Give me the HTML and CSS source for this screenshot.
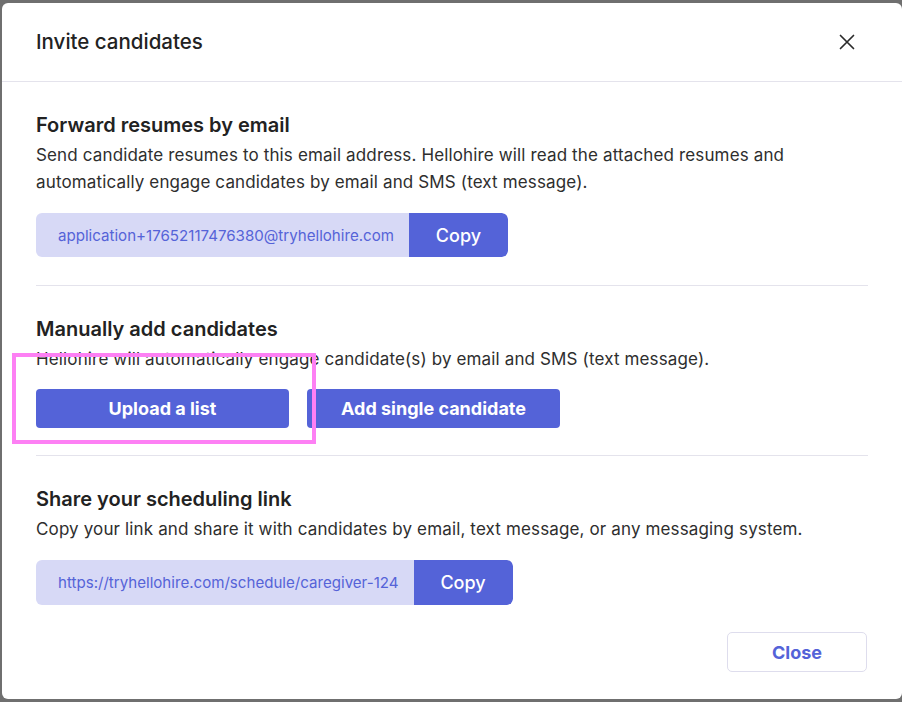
FILE: index.html
```html
<!DOCTYPE html>
<html lang="en">
<head>
<meta charset="utf-8">
<title>Invite candidates</title>
<link rel="stylesheet" href="styles.css">
</head>
<body>
<div class="modal">
  <header class="modal-header">
    <h2 class="modal-title">Invite candidates</h2>
    <button class="icon-close" aria-label="Close">
      <svg width="16" height="16" viewBox="0 0 16 16"><path d="M1.5 1.5 L14.5 14.5 M14.5 1.5 L1.5 14.5" stroke="#2b2b2b" stroke-width="1.7" stroke-linecap="round" fill="none"/></svg>
    </button>
  </header>

  <section class="section">
    <h3 class="section-title">Forward resumes by email</h3>
    <p class="section-desc">Send candidate resumes to this email address. Hellohire will read the attached resumes and automatically engage candidates by email and SMS (text message).</p>
    <div class="copy-field">
      <span class="field-value">application+17652117476380@tryhellohire.com</span>
      <button class="copy-btn">Copy</button>
    </div>
  </section>

  <section class="section section-divided section-manual">
    <h3 class="section-title">Manually add candidates</h3>
    <p class="section-desc">Hellohire will automatically engage candidate(s) by email and SMS (text message).</p>
    <div class="btn-row">
      <button class="primary-btn">Upload a list</button>
      <button class="primary-btn">Add single candidate</button>
    </div>
  </section>

  <section class="section section-divided section-share">
    <h3 class="section-title">Share your scheduling link</h3>
    <p class="section-desc">Copy your link and share it with candidates by email, text message, or any messaging system.</p>
    <div class="copy-field copy-field-tall">
      <span class="field-value">https://tryhellohire.com/schedule/caregiver-124</span>
      <button class="copy-btn">Copy</button>
    </div>
  </section>

  <footer class="modal-footer">
    <button class="secondary-btn">Close</button>
  </footer>

  <div class="highlight"></div>
</div>
</body>
</html>
```

FILE: styles.css
```css
* { box-sizing: border-box; }

html, body {
  margin: 0;
  padding: 0;
}

body {
  background: #6f6f6f;
  font-family: Inter, "Noto Sans", sans-serif;
  width: 902px;
  height: 702px;
  overflow: hidden;
}

.modal {
  position: relative;
  margin: 3px 0 0 2px;
  width: 900px;
  height: 696px;
  background: #ffffff;
  border-radius: 6px;
  display: flex;
  flex-direction: column;
}

.modal-header {
  height: 79px;
  padding: 0 39px 0 34px;
  display: flex;
  align-items: center;
  justify-content: space-between;
  border-bottom: 1px solid #e4e3ec;
}

.modal-title {
  margin: 0;
  font-size: 20.5px;
  line-height: 28px;
  font-weight: 500;
  color: #222222;
}

.icon-close {
  width: 32px;
  height: 32px;
  padding: 0;
  border: 0;
  background: transparent;
  display: flex;
  align-items: center;
  justify-content: center;
}

.section {
  margin: 0 34px;
  padding: 29px 0 28px;
}

.section-divided {
  border-top: 1px solid #e4e3ec;
}

.section-manual {
  padding-bottom: 27px;
}

.section-share {
  padding-bottom: 0;
}

.section-title {
  margin: 0;
  font-size: 20px;
  line-height: 28px;
  font-weight: 600;
  color: #222222;
}

.section-desc {
  margin: 3px 0 0;
  font-size: 17px;
  letter-spacing: 0.14px;
  line-height: 27px;
  color: #2e2e2e;
}

.copy-field {
  margin-top: 17px;
  display: inline-flex;
  height: 44px;
  border-radius: 6px;
  overflow: hidden;
}

.copy-field-tall {
  height: 45px;
  margin-top: 17px;
}

.field-value {
  display: flex;
  align-items: center;
  padding: 0 15px 0 22px;
  background: #d7d9f6;
  color: #5563d8;
  font-size: 15.1px;
}

.copy-btn {
  width: 99px;
  border: 0;
  background: #5463d8;
  color: #ffffff;
  font-family: inherit;
  font-size: 18px;
  font-weight: 500;
  border-radius: 0 6px 6px 0;
}

.btn-row {
  margin-top: 16px;
  display: flex;
  gap: 18px;
}

.primary-btn {
  width: 253px;
  height: 39px;
  border: 0;
  border-radius: 4px;
  background: #5463d8;
  color: #ffffff;
  font-family: inherit;
  font-size: 18px;
  font-weight: 700;
}

.modal-footer {
  margin-top: auto;
  padding: 0 35px 27px 34px;
  display: flex;
  justify-content: flex-end;
}

.secondary-btn {
  width: 140px;
  height: 40px;
  border: 1px solid #dedded;
  border-radius: 5px;
  background: #ffffff;
  color: #5463d8;
  font-family: inherit;
  font-size: 18px;
  font-weight: 700;
}

.highlight {
  position: absolute;
  left: 10px;
  top: 350px;
  width: 304px;
  height: 91px;
  border: 4px solid #fd80f4;
  pointer-events: none;
}
```
